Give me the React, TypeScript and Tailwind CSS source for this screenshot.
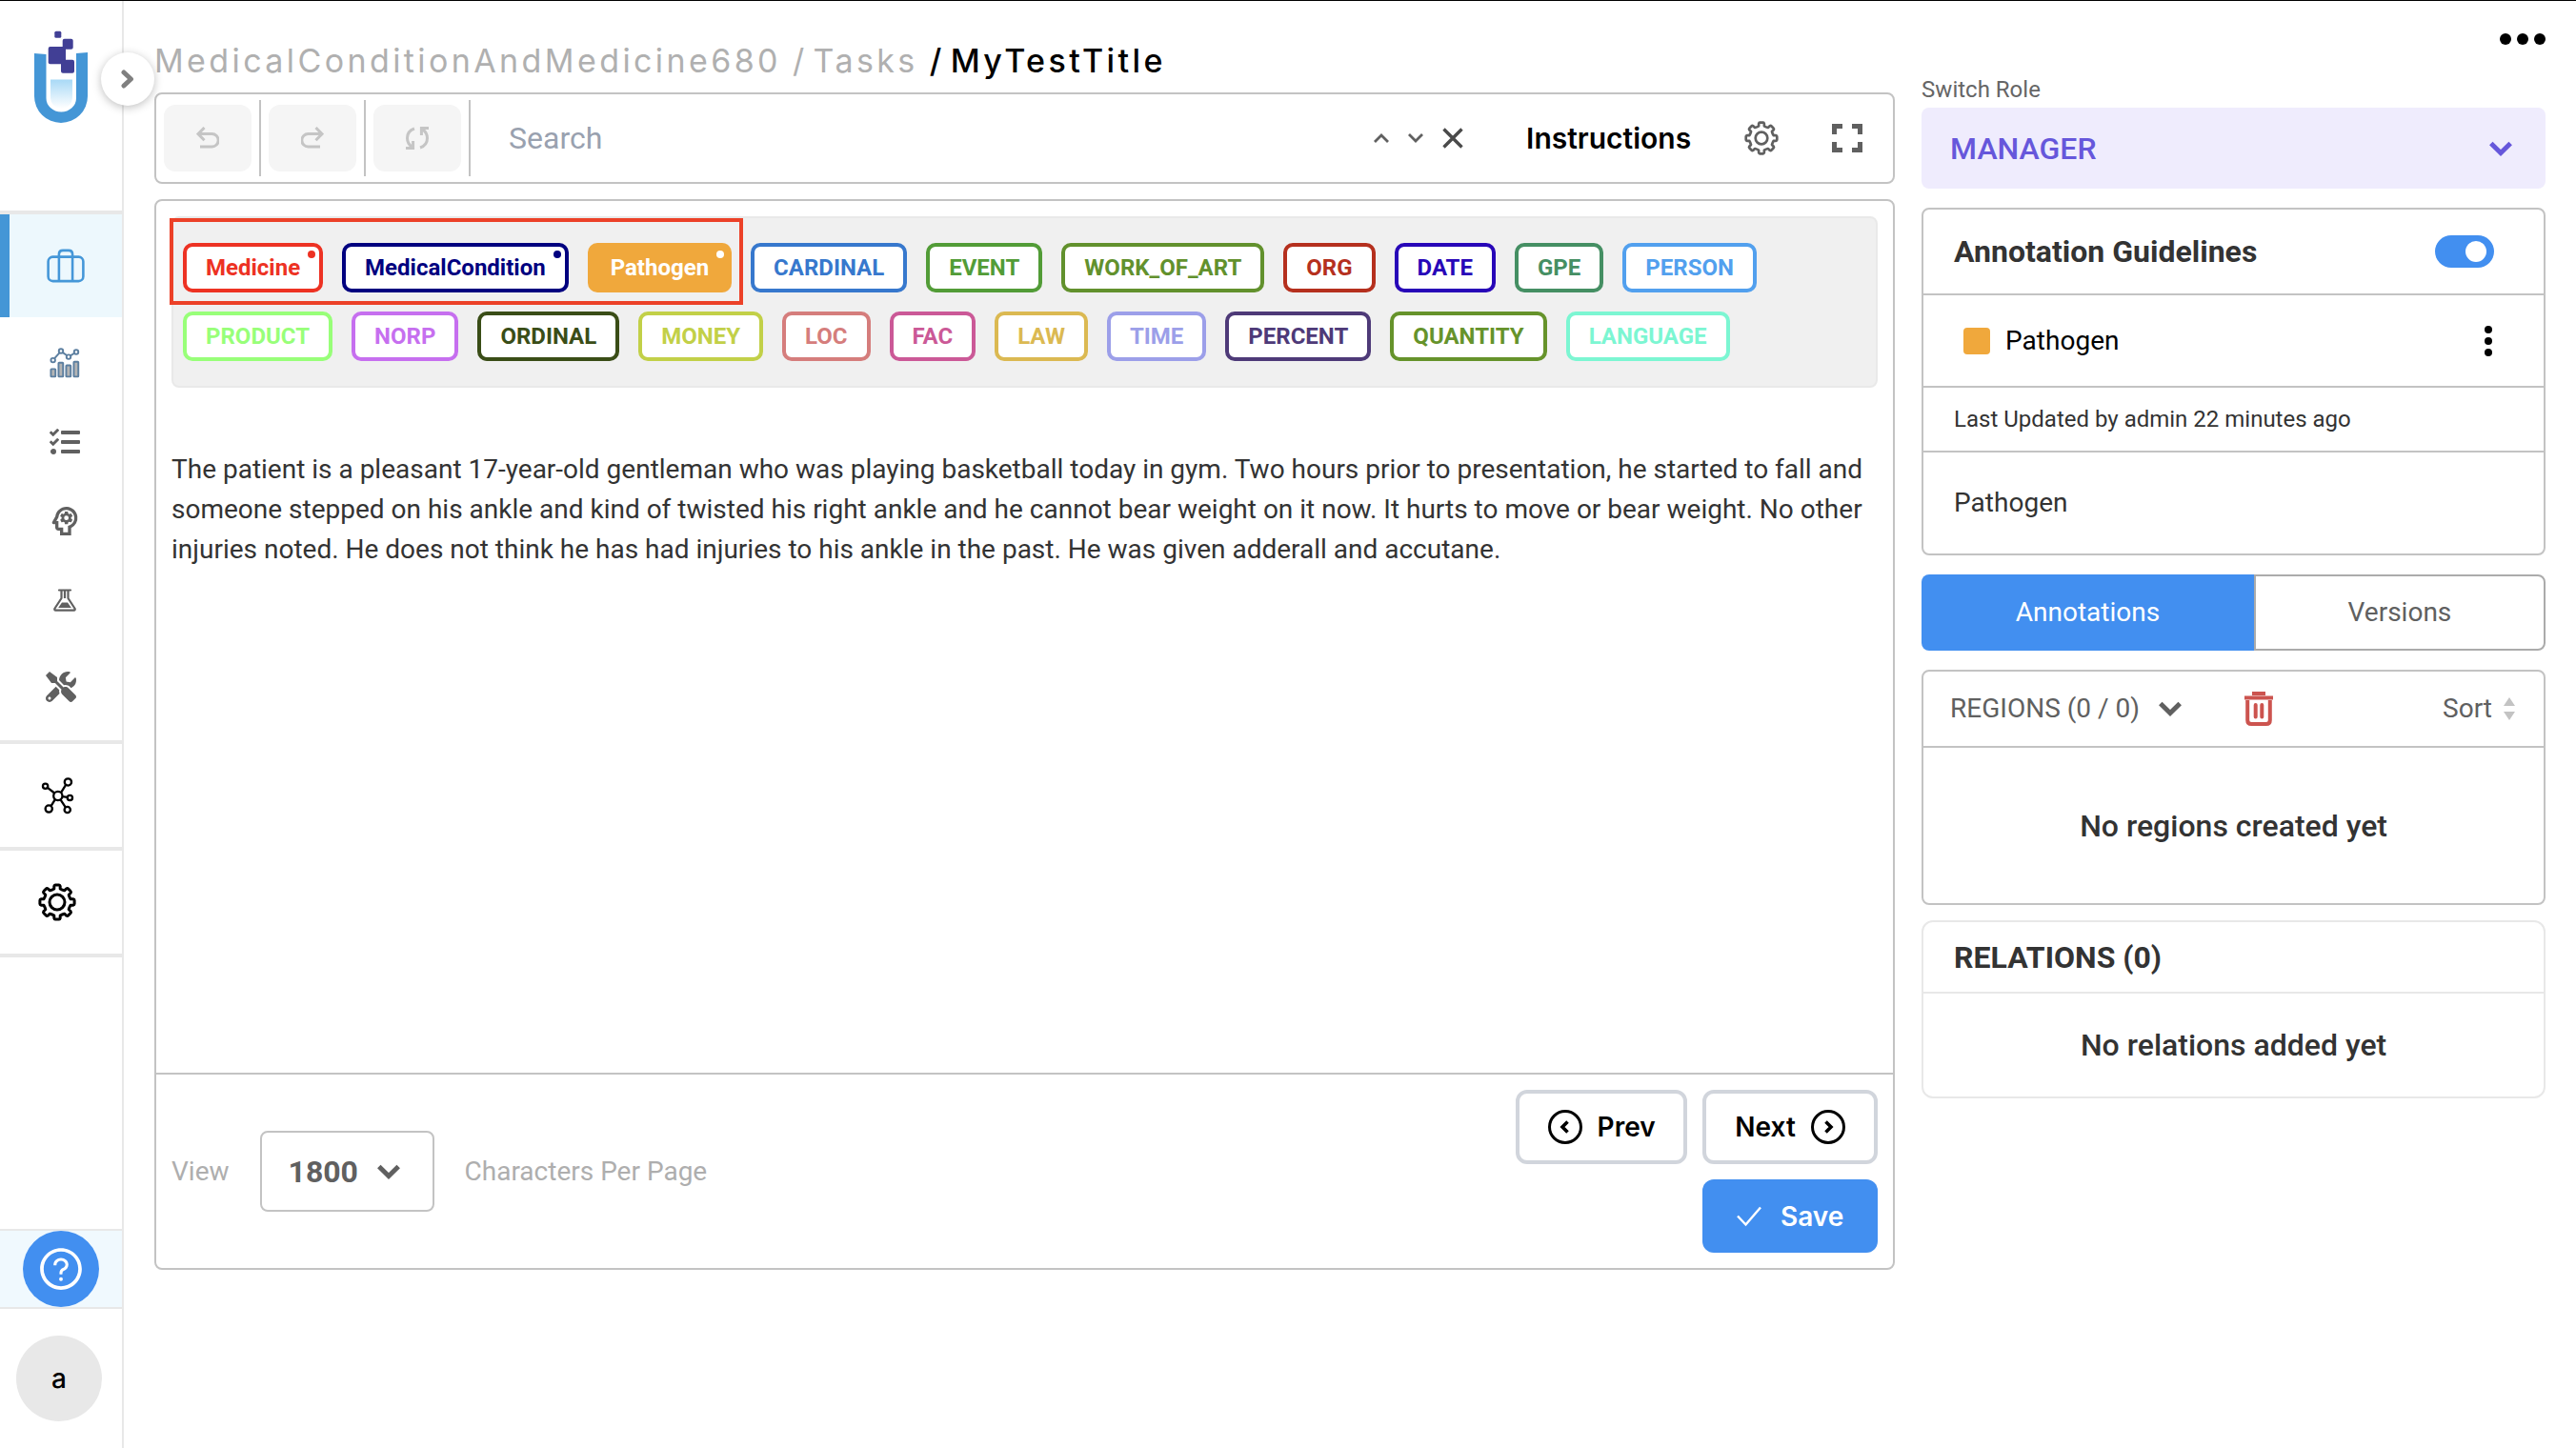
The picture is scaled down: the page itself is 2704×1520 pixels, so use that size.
import React from "react";
import { FaTools, FaTasks } from "react-icons/fa";
import { MdOutlinePsychology } from "react-icons/md";
import { AiOutlineQuestionCircle } from "react-icons/ai";

type Tag = { name: string; tone: string; dot?: string };

const customTags: Tag[] = [
  { name: "Medicine", tone: "border-[#ed3223] bg-white text-[#ed3223]", dot: "bg-[#ed3223]" },
  { name: "MedicalCondition", tone: "border-[#00007f] bg-white text-[#00007f]", dot: "bg-[#00007f]" },
  { name: "Pathogen", tone: "border-[#f0a83c] bg-[#f0a83c] text-white", dot: "bg-white" },
];

const modelTags: Tag[] = [
  { name: "CARDINAL", tone: "border-[#3778cd] bg-white text-[#3778cd]" },
  { name: "EVENT", tone: "border-[#529c37] bg-white text-[#529c37]" },
  { name: "WORK_OF_ART", tone: "border-[#62912d] bg-white text-[#62912d]" },
  { name: "ORG", tone: "border-[#b5301e] bg-white text-[#b5301e]" },
  { name: "DATE", tone: "border-[#2807b8] bg-white text-[#2807b8]" },
  { name: "GPE", tone: "border-[#458f63] bg-white text-[#458f63]" },
  { name: "PERSON", tone: "border-[#52a0ee] bg-white text-[#52a0ee]" },
  { name: "PRODUCT", tone: "border-[#98ff79] bg-white text-[#98ff79]" },
  { name: "NORP", tone: "border-[#c66fef] bg-white text-[#c66fef]" },
  { name: "ORDINAL", tone: "border-[#3a4d17] bg-white text-[#3a4d17]" },
  { name: "MONEY", tone: "border-[#c2d048] bg-white text-[#c2d048]" },
  { name: "LOC", tone: "border-[#d57d7c] bg-white text-[#d57d7c]" },
  { name: "FAC", tone: "border-[#cb5997] bg-white text-[#cb5997]" },
  { name: "LAW", tone: "border-[#dbb952] bg-white text-[#dbb952]" },
  { name: "TIME", tone: "border-[#9c9fe9] bg-white text-[#9c9fe9]" },
  { name: "PERCENT", tone: "border-[#4e3a78] bg-white text-[#4e3a78]" },
  { name: "QUANTITY", tone: "border-[#66932b] bg-white text-[#66932b]" },
  { name: "LANGUAGE", tone: "border-[#7cf6d2] bg-white text-[#7cf6d2]" },
];

function TagButton({ tag }: { tag: Tag }) {
  return (
    <button
      type="button"
      className={`relative h-[52px] rounded-[10px] border-4 px-5 text-2xl leading-8 font-bold ${tag.tone}`}
    >
      {tag.name}
      {tag.dot && <span className={`absolute top-1 right-1 size-2 rounded-full ${tag.dot}`} />}
    </button>
  );
}

/* ---------- icons ---------- */

function Logo() {
  return (
    <svg viewBox="0 0 56 98" className="h-[98px] w-14" role="img" aria-label="Home">
      <defs>
        <linearGradient id="liquid" x1="0" y1="0" x2="0" y2="1">
          <stop offset="0" stopColor="#a8d9f6" />
          <stop offset="1" stopColor="#fff" />
        </linearGradient>
      </defs>
      <path fill="#4496d6" d="M0 25l12.5 1v46a15.7 14.5 0 0 0 31.5 0V25l12-1v46a28 28 0 0 1-56 0z" />
      <path fill="url(#liquid)" d="M17 52.5h23V71a11.5 12 0 0 1-23 0z" />
      <g fill="#413f95">
        <rect x="21.3" y="1.7" width="7" height="7" rx="1.5" />
        <rect x="29.7" y="9.7" width="11" height="11" rx="2" />
        <rect x="14.7" y="18" width="18.3" height="18.3" rx="2" />
        <rect x="28" y="31.7" width="14" height="14" rx="2" />
      </g>
    </svg>
  );
}

const point = (radius: number, degrees: number) => {
  const a = (degrees * Math.PI) / 180;
  return `${(20 + radius * Math.sin(a)).toFixed(2)} ${(20 - radius * Math.cos(a)).toFixed(2)}`;
};

/* Eight rounded lobes joined by concave valleys. */
const gearPath =
  Array.from({ length: 8 }, (_, i) => {
    const c = i * 45;
    return `${i ? "L" : "M"}${point(14.4, c - 13)}Q${point(16, c - 11)} ${point(17, c - 11)}Q${point(18.4, c - 9)} ${point(18.2, c - 6)}L${point(18.2, c + 6)}Q${point(18.4, c + 9)} ${point(17, c + 11)}Q${point(16, c + 11)} ${point(14.4, c + 13)}Q${point(13.8, c + 22.5)} ${point(14.4, c + 32)}`;
  }).join("") + "Z";

function Gear({ className, hub }: { className: string; hub: number }) {
  return (
    <svg viewBox="0 0 40 40" fill="none" stroke="currentColor" strokeLinejoin="round" className={className} aria-hidden="true">
      <path strokeWidth="3" d={gearPath} />
      <circle cx="20" cy="20" r={hub} strokeWidth="3" />
    </svg>
  );
}

function SuitcaseIcon() {
  return (
    <svg viewBox="0 0 124 110" fill="none" stroke="currentColor" strokeWidth="8" className="h-9 w-10" aria-hidden="true">
      <rect x="5" y="26" width="114" height="79" rx="15" />
      <path d="M40 105V18q0-13 13-13h18q13 0 13 13v87" />
    </svg>
  );
}

function ChartIcon() {
  return (
    <svg viewBox="0 0 99 100" fill="none" stroke="#5c7fa0" strokeWidth="6" className="size-8" aria-hidden="true">
      <g fill="#b4b4b4">
        <rect x="4" y="70" width="15" height="25" rx="2" />
        <rect x="29" y="49" width="15" height="46" rx="2" />
        <rect x="54" y="58" width="15" height="37" rx="2" />
        <rect x="79" y="46" width="15" height="49" rx="2" />
      </g>
      <circle cx="11" cy="41" r="7" />
      <circle cx="37" cy="11" r="7" />
      <circle cx="62" cy="30" r="7" />
      <circle cx="87" cy="14" r="7" />
      <path d="M16 35l16-18M43 16l13 9M68 26l13-8" />
    </svg>
  );
}

function FlaskIcon() {
  return (
    <svg viewBox="0 0 24 24" fill="none" stroke="currentColor" strokeWidth="2.2" className="size-6" aria-hidden="true">
      <path strokeLinecap="round" d="M6 1.5h12" />
      <path strokeLinejoin="round" d="M8.5 2v8L1.6 20.5q-1 2 1 2.2h18.8q2-.2 1-2.2L15.5 10V2M12 2v8" />
      <path fill="currentColor" stroke="none" d="M9 14.5h6l3.8 5.5H5.2z" />
    </svg>
  );
}

function NetworkIcon() {
  return (
    <svg viewBox="0 0 104 118" fill="none" stroke="currentColor" strokeWidth="7" className="h-[39px] w-[35px]" aria-hidden="true">
      <circle cx="53" cy="59" r="14" />
      <circle cx="13" cy="28" r="8" />
      <circle cx="85" cy="15" r="11" />
      <circle cx="91" cy="65" r="8" />
      <circle cx="83" cy="103" r="9.5" />
      <circle cx="24" cy="100" r="11" />
      <path d="M20 33l22 17M78 24L63 48M67 61l16 2M61 71l16 24M44 70l-13 21" />
    </svg>
  );
}

function UndoIcon({ flipped }: { flipped?: boolean }) {
  return (
    <svg viewBox="0 0 24 24" fill="none" stroke="currentColor" strokeWidth="3" className={flipped ? "size-6 -scale-x-100" : "size-6"} aria-hidden="true">
      <path d="M8.5 1L2 7.6l6.5 6.6M2 7.6h14.5a6.7 6.7 0 0 1 0 13.4H4" />
    </svg>
  );
}

function ResetIcon() {
  return (
    <svg viewBox="0 0 24 24" fill="none" stroke="currentColor" strokeWidth="3" className="size-6" aria-hidden="true">
      <path d="M9 2C4 3.7 1.5 7.5 1.5 12c0 3.5 1.5 6.5 4.5 9M15 22c5-1.7 7.500-5.500 7.500-10 0-3.500-1.500-6.500-4.500-9" />
      <path d="M7.600 15v7.500H0M16.400 9V1.500H24" />
    </svg>
  );
}

function FullscreenIcon() {
  return (
    <svg viewBox="0 0 32 30" fill="none" stroke="currentColor" strokeWidth="5" className="h-[30px] w-8" aria-hidden="true">
      <path d="M11 2.5H2.5V11M21 2.5h8.5V11M11 27.5H2.5V19M21 27.5h8.5V19" />
    </svg>
  );
}

function ChevronDown({ className = "" }: { className?: string }) {
  return (
    <svg viewBox="0 0 24 16" fill="none" stroke="currentColor" strokeWidth="5" className={`h-4 w-6 ${className}`} aria-hidden="true">
      <path d="M1.8 2.5L12 12.5l10.2-10" />
    </svg>
  );
}

function TrashIcon() {
  return (
    <svg viewBox="0 0 30 36" fill="none" stroke="currentColor" strokeWidth="4" className="h-9 w-[30px]" aria-hidden="true">
      <path d="M8 2h14M0 6.5h30M3.2 9v21q0 4 4 4h15.600q4 0 4-4V9" />
      <path strokeLinecap="round" d="M11.700 14v12.500M18.300 14v12.500" />
    </svg>
  );
}

function CircleArrow({ next }: { next?: boolean }) {
  return (
    <svg viewBox="0 0 36 36" fill="none" stroke="currentColor" className="size-9" aria-hidden="true">
      <circle cx="18" cy="18" r="16.5" strokeWidth="3" />
      <path strokeWidth="3.6" d={next ? "M15.5 12.5L21 18l-5.5 5.5" : "M20.5 12.5L15 18l5.5 5.5"} />
    </svg>
  );
}

/* ---------- sidebar ---------- */

const navLinks = [
  { label: "Analytics", icon: <ChartIcon /> },
  { label: "Tasks", icon: <FaTasks className="size-8" /> },
  { label: "Models", icon: <MdOutlinePsychology className="size-10" /> },
  { label: "Playground", icon: <FlaskIcon /> },
];

function Sidebar() {
  return (
    <aside className="relative flex w-[130px] shrink-0 flex-col border-r-2 border-[#e8e8e8] text-[#606060]">
      <a href="#home" className="flex h-[224px] justify-center border-b-4 border-[#e8e8e8] pt-[30px]">
        <Logo />
      </a>
      <button
        type="button"
        aria-label="Expand sidebar"
        className="absolute top-[54px] -right-[34px] z-10 flex size-14 items-center justify-center rounded-full bg-white text-[#808080] shadow-[0_2px_10px_rgba(0,0,0,0.25)]"
      >
        <svg viewBox="0 0 14 20" fill="none" stroke="currentColor" strokeWidth="5" strokeLinecap="round" strokeLinejoin="round" className="h-5 w-3.5" aria-hidden="true">
          <path d="M3 3l7.5 7L3 17" />
        </svg>
      </button>
      <nav>
        <a
          href="#projects"
          aria-label="Projects"
          className="flex h-27 items-center justify-center border-l-10 border-[#4496d6] bg-[#edf8fd] text-[#4597d8]"
        >
          <SuitcaseIcon />
        </a>
        <div className="border-b-4 border-[#e8e8e8] py-1.5">
          {navLinks.map((link) => (
            <a key={link.label} href="#nav" aria-label={link.label} className="flex h-[83px] items-center justify-center pl-2">
              {link.icon}
            </a>
          ))}
          <a href="#tools" aria-label="Tools" className="flex h-25 items-center justify-center">
            <FaTools className="size-8" />
          </a>
        </div>
        <a href="#hub" aria-label="Models hub" className="flex h-28 items-center justify-center border-b-4 border-[#e8e8e8] pr-2 text-black">
          <NetworkIcon />
        </a>
        <a href="#settings" aria-label="Settings" className="flex h-28 items-center justify-center border-b-4 border-[#e8e8e8] pr-2 text-black">
          <Gear className="size-10" hub={8} />
        </a>
      </nav>
      <div className="mt-auto flex justify-center border-y-2 border-[#e8e8e8] bg-[#f0f9fe]">
        <button type="button" aria-label="Help" className="flex size-20 items-center justify-center rounded-full bg-[#428ff0] text-white">
          <AiOutlineQuestionCircle className="size-[50px]" />
        </button>
      </div>
      <button
        type="button"
        aria-label="Account"
        className="my-7 ml-[17px] size-[90px] rounded-full bg-[#e8e8e8] font-['Inter',sans-serif] text-[28px] font-medium text-black"
      >
        a
      </button>
    </aside>
  );
}

/* ---------- main column ---------- */

function Breadcrumb() {
  return (
    <nav aria-label="Breadcrumb" className="pt-[43px] pb-[13px]">
      <ol className="flex gap-3 font-['Inter',sans-serif] text-[34px] leading-10 tracking-widest text-[#b0b0b0]">
        <li>
          <a href="#project">MedicalConditionAndMedicine680</a>
        </li>
        <li className="flex gap-1.5">
          <span>/</span>
          <a href="#tasks">Tasks</a>
        </li>
        <li className="flex gap-1.5 font-medium text-black" aria-current="page">
          <span>/</span>
          <span>MyTestTitle</span>
        </li>
      </ol>
    </nav>
  );
}

function Toolbar() {
  const tools = [
    { label: "Undo", icon: <UndoIcon /> },
    { label: "Redo", icon: <UndoIcon flipped /> },
    { label: "Reset", icon: <ResetIcon /> },
  ];
  return (
    <div className="flex items-center rounded-lg border-2 border-[#c3c3c3] py-1.5">
      {tools.map((tool) => (
        <div key={tool.label} className="flex h-20 items-center border-r-2 border-[#c3c3c3] px-2">
          <button
            type="button"
            disabled
            aria-label={tool.label}
            className="flex h-[70px] w-23 items-center justify-center rounded-xl bg-[#f5f5f5] text-[#c5c5c5]"
          >
            {tool.icon}
          </button>
        </div>
      ))}
      <input
        type="text"
        aria-label="Search"
        placeholder="Search"
        className="min-w-0 flex-1 px-10 text-[32px] leading-10 placeholder:text-gray-400"
      />
      <div className="flex items-center gap-14 pr-8 text-[#606060]">
        <div className="mr-2.5 flex items-center gap-5">
          <button type="button" aria-label="Previous match">
            <svg viewBox="0 0 16 12" fill="none" stroke="currentColor" strokeWidth="2.8" className="h-3 w-4" aria-hidden="true">
              <path d="M1 10l7-7 7 7" />
            </svg>
          </button>
          <button type="button" aria-label="Next match">
            <svg viewBox="0 0 16 12" fill="none" stroke="currentColor" strokeWidth="2.8" className="h-3 w-4" aria-hidden="true">
              <path d="M1 2l7 7 7-7" />
            </svg>
          </button>
          <button type="button" aria-label="Clear search">
            <svg viewBox="0 0 22 22" fill="none" stroke="#4a4a4a" strokeWidth="3.4" className="size-[22px]" aria-hidden="true">
              <path d="M1.5 1.5l19 19M20.5 1.5l-19 19" />
            </svg>
          </button>
        </div>
        <button type="button" className="font-['Inter',sans-serif] text-[30px] leading-10 font-semibold text-black">
          Instructions
        </button>
        <button type="button" aria-label="Editor settings">
          <Gear className="size-9" hub={7} />
        </button>
        <button type="button" aria-label="Full screen">
          <FullscreenIcon />
        </button>
      </div>
    </div>
  );
}

function Editor() {
  return (
    <section className="mt-4 rounded-lg border-2 border-[#c3c3c3]">
      <div className="px-4 pt-4">
        <div className="flex flex-wrap gap-5 rounded-lg border-2 border-[#e9e9e9] bg-[#f0f0f0] px-2.5 py-[26px]">
          <div className="relative flex gap-5">
            {customTags.map((tag) => (
              <TagButton key={tag.name} tag={tag} />
            ))}
            <span className="pointer-events-none absolute -top-[26px] -right-3 -bottom-[13px] -left-3.5 border-4 border-[#ec4128]" />
          </div>
          {modelTags.map((tag) => (
            <TagButton key={tag.name} tag={tag} />
          ))}
        </div>
        <p className="min-h-[719px] pt-[65px] text-[28px] leading-[42px] text-[#333]">
          The patient is a pleasant 17-year-old gentleman who was playing basketball today in gym. Two hours prior to
          presentation, he started to fall and someone stepped on his ankle and kind of twisted his right ankle and he
          cannot bear weight on it now. It hurts to move or bear weight. No other injuries noted. He does not think he
          has had injuries to his ankle in the past. He was given adderall and accutane.
        </p>
      </div>
      <footer className="flex items-center justify-between border-t-2 border-[#c3c3c3] p-4">
        <div className="flex items-center gap-8 text-[28px] text-[#aeaeae]">
          <label htmlFor="page-size">View</label>
          <div className="relative flex items-center text-[#606060]">
            <select
              id="page-size"
              defaultValue="1800"
              className="h-[85px] w-[183px] appearance-none rounded-lg border-2 border-[#c3c3c3] bg-white pl-7 text-[32px] font-bold"
            >
              <option value="1800">1800</option>
            </select>
            <ChevronDown className="pointer-events-none absolute right-9" />
          </div>
          <span>Characters Per Page</span>
        </div>
        <div className="grid justify-items-end gap-4 font-['Inter',sans-serif] text-[28px] font-semibold text-black">
          <div className="flex gap-4">
            <button type="button" className="flex h-[78px] w-[180px] items-center justify-center gap-4 rounded-xl border-4 border-gray-300">
              <CircleArrow />
              Prev
            </button>
            <button type="button" className="flex h-[78px] w-[184px] items-center justify-center gap-4 rounded-xl border-4 border-gray-300">
              Next
              <CircleArrow next />
            </button>
          </div>
          <button type="button" className="flex h-[77px] w-[184px] items-center justify-center gap-5 rounded-xl bg-[#428ff0] text-white">
            <svg viewBox="0 0 26 22" fill="none" stroke="currentColor" strokeWidth="2.4" className="h-[22px] w-[26px]" aria-hidden="true">
              <path d="M1 10.5l8.5 9L25 1.5" />
            </svg>
            Save
          </button>
        </div>
      </footer>
    </section>
  );
}

/* ---------- right column ---------- */

function RoleSwitch() {
  return (
    <div>
      <label htmlFor="role" className="block pb-[3px] text-2xl leading-8 text-[#666]">
        Switch Role
      </label>
      <div className="relative flex items-center text-[#6657db]">
        <select
          id="role"
          defaultValue="MANAGER"
          className="h-[85px] w-full appearance-none rounded-lg bg-[#efecfd] pl-[30px] text-[32px] font-medium"
        >
          <option value="MANAGER">MANAGER</option>
        </select>
        <ChevronDown className="pointer-events-none absolute right-[35px]" />
      </div>
    </div>
  );
}

function Guidelines() {
  return (
    <section className="mt-5 divide-y-2 divide-[#c3c3c3] rounded-lg border-2 border-[#c3c3c3]">
      <div className="flex h-[90px] items-center justify-between pr-[52px] pl-8">
        <label htmlFor="guidelines" className="text-[32px] font-bold text-[#333]">
          Annotation Guidelines
        </label>
        <input
          id="guidelines"
          type="checkbox"
          role="switch"
          defaultChecked
          className="relative h-[34px] w-[62px] appearance-none rounded-full bg-gray-300 before:absolute before:top-1.5 before:left-2 before:size-[22px] before:rounded-full before:bg-white checked:bg-[#428ff0] checked:before:left-8"
        />
      </div>
      <div className="flex h-[97px] items-center gap-4 pr-[54px] pl-[42px] text-[28px] text-black">
        <span className="size-7 rounded bg-[#f0a83c]" />
        <span className="flex-1">Pathogen</span>
        <button type="button" aria-label="Guideline actions" className="grid gap-1">
          <span className="size-2 rounded-full bg-black" />
          <span className="size-2 rounded-full bg-black" />
          <span className="size-2 rounded-full bg-black" />
        </button>
      </div>
      <p className="flex h-[68px] items-center pl-8 text-2xl text-[#333]">Last Updated by admin 22 minutes ago</p>
      <p className="flex h-[106px] items-center pl-8 text-[28px] text-[#333]">Pathogen</p>
    </section>
  );
}

function Tabs() {
  return (
    <div role="tablist" className="mt-5 flex h-20 text-[28px]">
      <button type="button" role="tab" aria-selected="true" className="flex-auto rounded-l-lg bg-[#428ff0] px-0.5 text-white">
        Annotations
      </button>
      <button type="button" role="tab" aria-selected="false" className="flex-auto rounded-r-lg border-2 border-[#ababab] text-[#606060]">
        Versions
      </button>
    </div>
  );
}

function Regions() {
  return (
    <section className="mt-5 rounded-lg border-2 border-[#c3c3c3]">
      <header className="flex h-20 items-center border-b-2 border-[#c3c3c3] pr-[30px] pl-7 text-[28px] text-[#606060]">
        <button type="button" className="flex items-center gap-5">
          REGIONS (0 / 0)
          <ChevronDown />
        </button>
        <button type="button" aria-label="Delete all regions" className="ml-[66px] text-[#cc544f]">
          <TrashIcon />
        </button>
        <button type="button" className="ml-auto flex items-center gap-3">
          Sort
          <svg viewBox="0 0 12 24" fill="#c3c3c3" className="h-6 w-3" aria-hidden="true">
            <path d="M6 0l6 9H0zM6 24L0 15h12z" />
          </svg>
        </button>
      </header>
      <p className="flex h-[163px] items-center justify-center text-[32px] font-medium text-[#333]">
        No regions created yet
      </p>
    </section>
  );
}

function Relations() {
  return (
    <section className="mt-4 rounded-xl border-2 border-[#e8e8e8] text-[32px] font-medium text-[#333]">
      <h2 className="flex h-[75px] items-center border-b-2 border-[#e8e8e8] pl-8 font-bold">RELATIONS (0)</h2>
      <p className="flex h-[108px] items-center justify-center">No relations added yet</p>
    </section>
  );
}

export default function App() {
  return (
    <div className="flex min-h-screen border-t border-black bg-white font-['Roboto',sans-serif]">
      <Sidebar />
      <div className="grid min-w-0 flex-1 grid-cols-[2.79fr_1fr] items-start gap-7 px-8">
        <main className="min-w-0">
          <Breadcrumb />
          <Toolbar />
          <Editor />
        </main>
        <aside className="min-w-0 pt-[34px]">
          <div className="flex justify-end pb-[31px]">
            <button type="button" aria-label="More options" className="flex gap-1.5">
              <span className="size-3 rounded-full bg-black" />
              <span className="size-3 rounded-full bg-black" />
              <span className="size-3 rounded-full bg-black" />
            </button>
          </div>
          <RoleSwitch />
          <Guidelines />
          <Tabs />
          <Regions />
          <Relations />
        </aside>
      </div>
    </div>
  );
}
